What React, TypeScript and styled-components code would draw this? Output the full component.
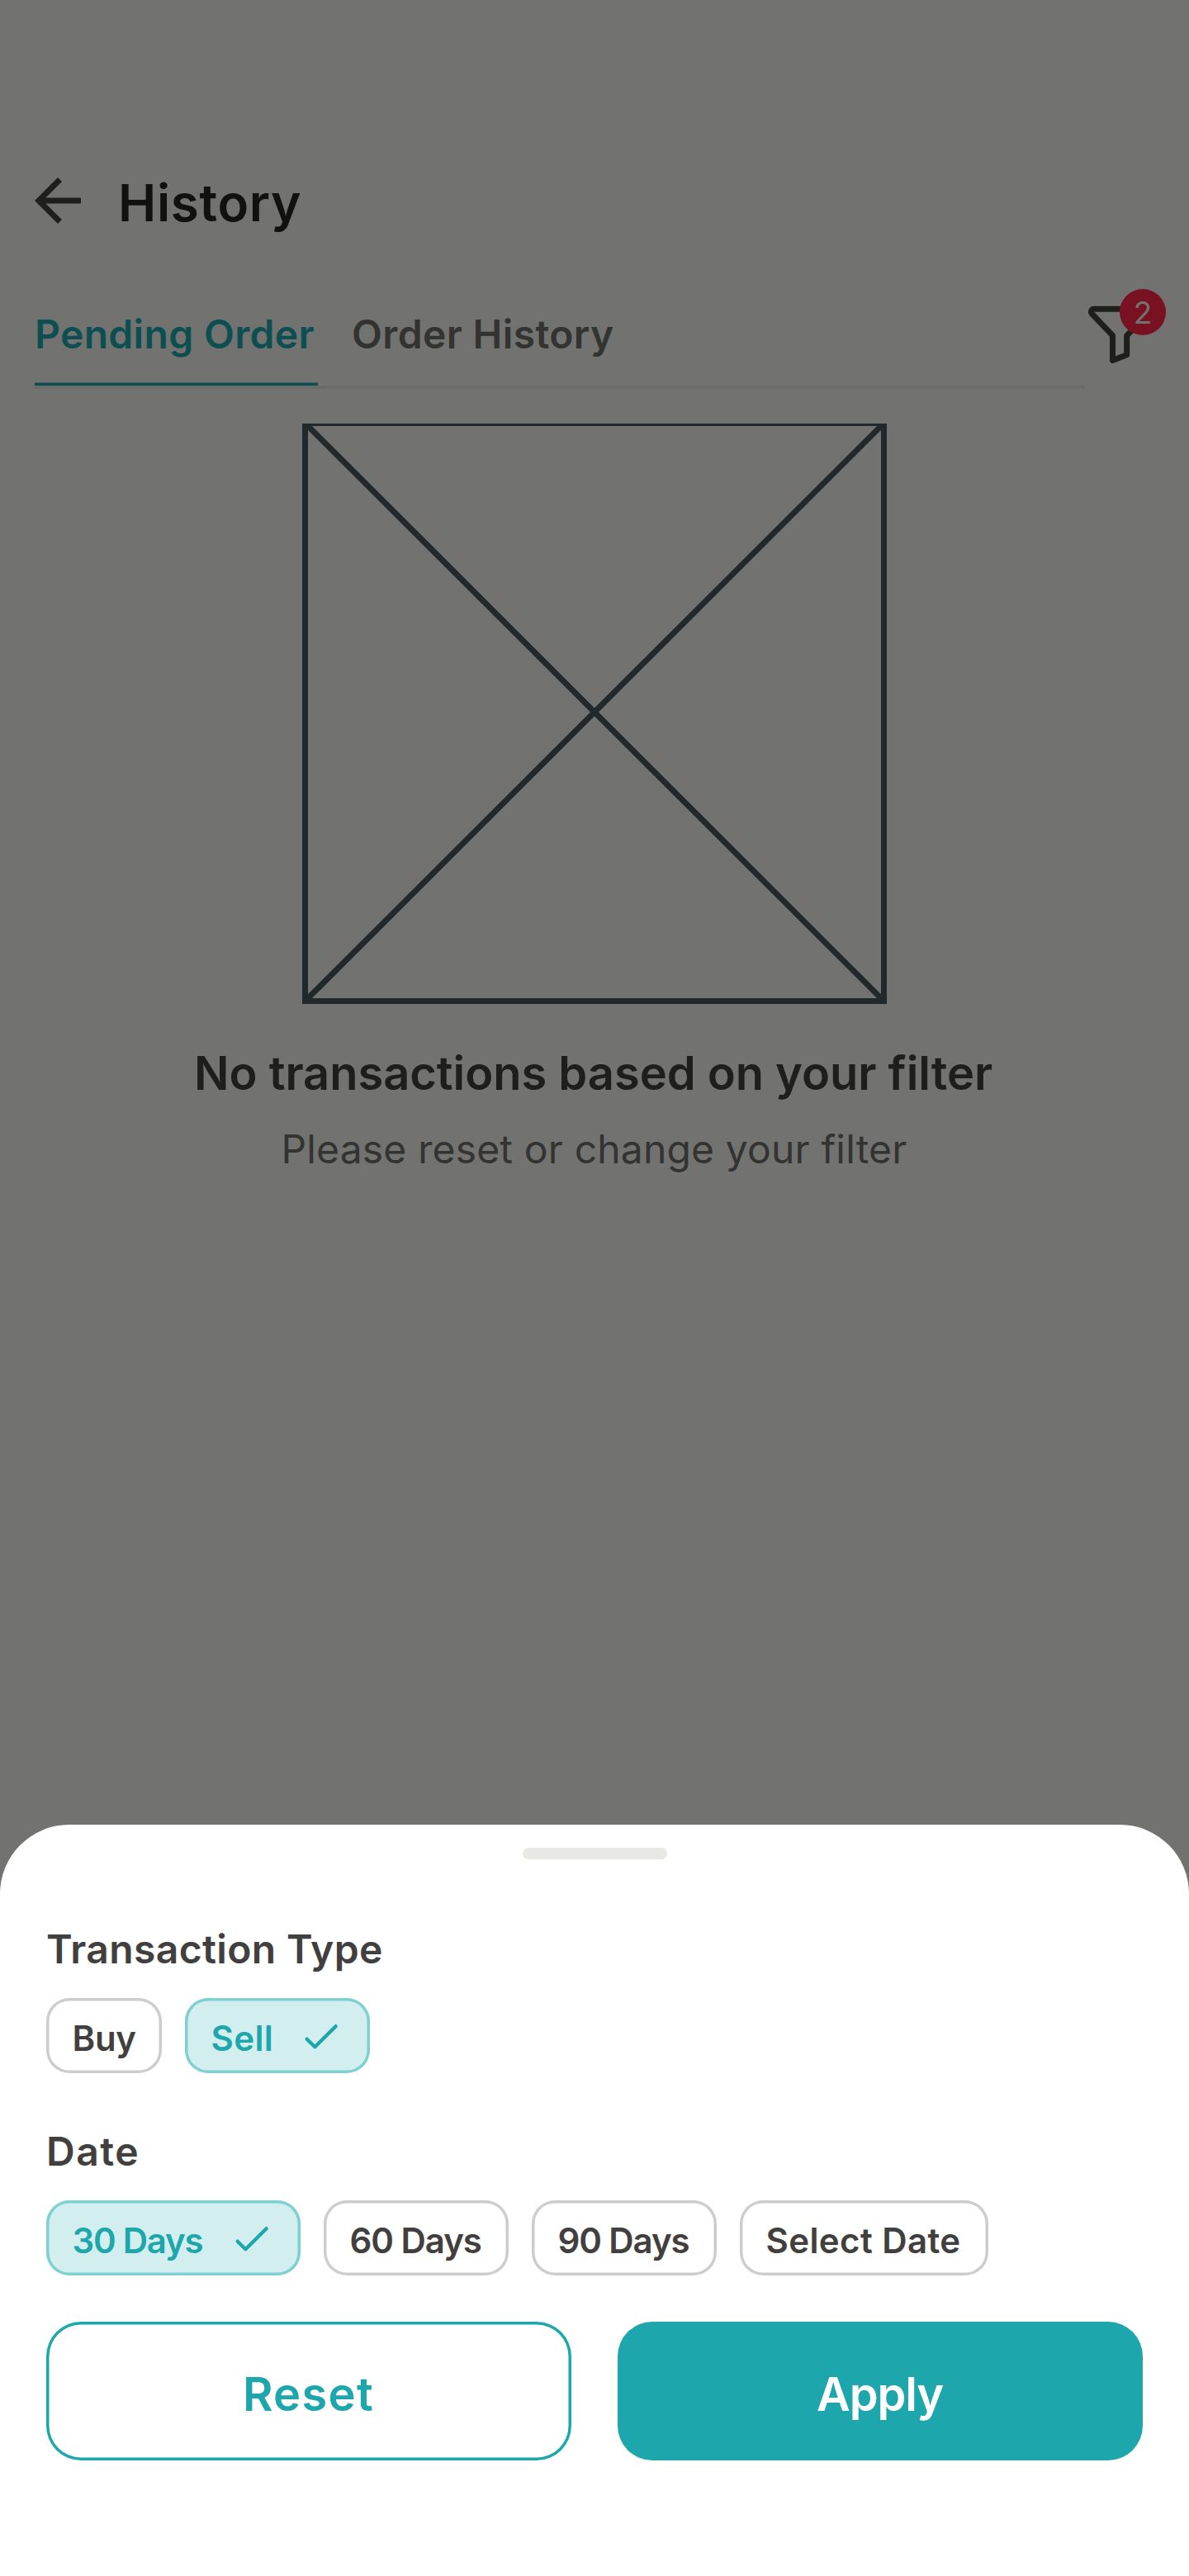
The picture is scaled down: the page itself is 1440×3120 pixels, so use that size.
import React from "react";
import styled, { createGlobalStyle } from "styled-components";

const Global = createGlobalStyle`
  body { margin: 0; background: #727270; }
  * { box-sizing: border-box; }
  button { border: 0; background: none; padding: 0; font: inherit; color: inherit; text-align: left; }
`;

const Screen = styled.div`
  width: 1440px;
  height: 3120px;
  display: flex;
  flex-direction: column;
  background: #727270;
  font-family: Inter, "Liberation Sans", sans-serif;
`;

const Label = styled.span<{ size: number; width?: number; weight?: number; spacing?: number }>`
  display: block;
  width: ${(p) => (p.width ? `${p.width}px` : "auto")};
  flex: none;
  font-size: ${(p) => p.size}px;
  line-height: ${(p) => Math.round(p.size * 1.4)}px;
  font-weight: ${(p) => p.weight ?? 600};
  letter-spacing: ${(p) => p.spacing ?? 0}px;
  white-space: nowrap;
`;

const Header = styled.header`
  display: flex;
  align-items: center;
  height: 168px;
  margin-top: 159px;
  padding-left: 28px;
  gap: 31px;
`;

const PageTitle = styled.h1`
  margin: 0;
  padding-top: 4px;
  color: #11110f;
`;

const TabBar = styled.div`
  display: flex;
  height: 154px;
  padding-left: 42px;
`;

const Tabs = styled.nav`
  display: flex;
  gap: 41px;
  width: 1272px;
  height: 144px;
  border-bottom: 4px solid #6b6b69;
`;

const Tab = styled.button<{ active?: boolean }>`
  display: flex;
  padding-top: 44px;
  height: 140px;
  color: ${(p) => (p.active ? "#0d4f50" : "#333332")};
  box-shadow: ${(p) => (p.active ? "inset 0 -3.5px #0d4f50" : "none")};
`;

const FilterButton = styled.button`
  position: relative;
  width: 84px;
  height: 84px;
  margin-top: 36px;
`;

const Badge = styled.span`
  position: absolute;
  left: 42px;
  top: -13.5px;
  width: 56px;
  height: 56px;
  border-radius: 50%;
  background: #781122;
  color: #727270;
  font-size: 37px;
  line-height: 58px;
  text-align: center;
`;

const Empty = styled.main`
  display: flex;
  flex-direction: column;
  align-items: center;
  padding-top: 32px;
`;

const Placeholder = styled.svg`
  display: block;
  width: 708px;
  height: 703px;
`;

const Title = styled.div`
  margin-top: 45px;
  color: #1e1e1c;
`;

const Subtitle = styled.div`
  margin-top: 19px;
  color: #333332;
`;

const Sheet = styled.section`
  margin-top: auto;
  height: 910px;
  border-radius: 84px 84px 0 0;
  background: #fff;
  display: flex;
  flex-direction: column;
  padding: 28px 56px 0;
  color: #41403e;
`;

const Handle = styled.div`
  width: 175px;
  height: 14px;
  border-radius: 7px;
  background: #e8e8e4;
  align-self: center;
`;

const Group = styled.div<{ top: number }>`
  margin-top: ${(p) => p.top}px;
`;

const Chips = styled.div`
  display: flex;
  gap: 28px;
  margin-top: 26px;
`;

const Chip = styled.button<{ width: number; selected?: boolean }>`
  display: flex;
  align-items: center;
  width: ${(p) => p.width}px;
  height: 91px;
  padding: 5px 28px 0 31.5px;
  border-radius: 28px;
  color: ${(p) => (p.selected ? "#1da7ac" : "inherit")};
  background: ${(p) => (p.selected ? "#d2eeee" : "#fff")};
  box-shadow: inset 0 0 0 3.5px ${(p) => (p.selected ? "#7fd0d1" : "#cdcdcd")};
`;

const Check = styled.svg`
  flex: none;
  width: 56px;
  height: 56px;
  margin: -5px 0 0 auto;
`;

const Actions = styled.div`
  display: grid;
  grid-template-columns: 1fr 1fr;
  gap: 56px;
  margin-top: 56px;
`;

const Action = styled.button<{ primary?: boolean }>`
  display: flex;
  align-items: center;
  justify-content: center;
  height: 168px;
  padding-top: 8px;
  border-radius: 42px;
  color: ${(p) => (p.primary ? "#fff" : "#1da7ac")};
  background: ${(p) => (p.primary ? "#1da7ac" : "#fff")};
  box-shadow: ${(p) => (p.primary ? "none" : "inset 0 0 0 3.5px #1da7ac")};
`;

const CheckIcon = () => (
  <Check viewBox="0 0 56 56">
    <path d="M7.700 31.700L17.400 41.200L42.600 16.200" fill="none" stroke="#1da7ac" strokeWidth="4.400" strokeLinecap="round" strokeLinejoin="round" />
  </Check>
);

export default function App() {
  return (
    <Screen>
      <Global />
      <Header>
        <svg width="84" height="84" viewBox="0 0 24 24" fill="#1e1e1c">
          <path d="M20 11H7.83l5.59-5.59L12 4l-8 8 8 8 1.41-1.41L7.83 13H20v-2z" />
        </svg>
        <PageTitle><Label size={62} spacing={0.65}>History</Label></PageTitle>
      </Header>
      <TabBar>
        <Tabs>
          <Tab active><Label size={48} width={343} spacing={0.32}>Pending Order</Label></Tab>
          <Tab><Label size={48} spacing={0.37}>Order History</Label></Tab>
        </Tabs>
        <FilterButton aria-label="Filter">
          <svg width="84" height="84" viewBox="0 0 84 84" fill="none" stroke="#1e1e1c" strokeWidth="7" strokeLinejoin="round">
            <path d="M11 11.200H73.200a3.500 3.500 0 0 1 2.600 5.900L50.700 43.400V66.800L33.500 73.500V43.400L8.400 17a3.500 3.500 0 0 1 2.600-5.800z" />
          </svg>
          <Badge>2</Badge>
        </FilterButton>
      </TabBar>
      <Empty>
        <Placeholder viewBox="0 0 708 703" fill="none" stroke="#21292d" strokeWidth="7">
          <path d="M3.500-.5H704.500V699.500H3.500zL704.500 699.500M704.500-.5L3.500 699.500" />
        </Placeholder>
        <Title><Label size={56} width={970} spacing={-0.03}>No transactions based on your filter</Label></Title>
        <Subtitle><Label size={48} width={759} weight={400} spacing={0.16}>Please reset or change your filter</Label></Subtitle>
      </Empty>
      <Sheet>
        <Handle />
        <Group top={75}>
          <Label size={48} spacing={0.37}>Transaction Type</Label>
          <Chips>
            <Chip width={140}><Label size={42} spacing={-0.3}>Buy</Label></Chip>
            <Chip width={224} selected><Label size={42} spacing={0.4}>Sell</Label><CheckIcon /></Chip>
          </Chips>
        </Group>
        <Group top={61}>
          <Label size={48} spacing={1.5}>Date</Label>
          <Chips>
            <Chip width={308} selected><Label size={42} spacing={-1.25}>30 Days</Label><CheckIcon /></Chip>
            <Chip width={224}><Label size={42} spacing={-1.05}>60 Days</Label></Chip>
            <Chip width={224}><Label size={42} spacing={-1.1}>90 Days</Label></Chip>
            <Chip width={301}><Label size={42} spacing={0.4}>Select Date</Label></Chip>
          </Chips>
        </Group>
        <Actions>
          <Action><Label size={56} width={160} spacing={1.3}>Reset</Label></Action>
          <Action primary><Label size={56} width={154} spacing={-1.1}>Apply</Label></Action>
        </Actions>
      </Sheet>
    </Screen>
  );
}
